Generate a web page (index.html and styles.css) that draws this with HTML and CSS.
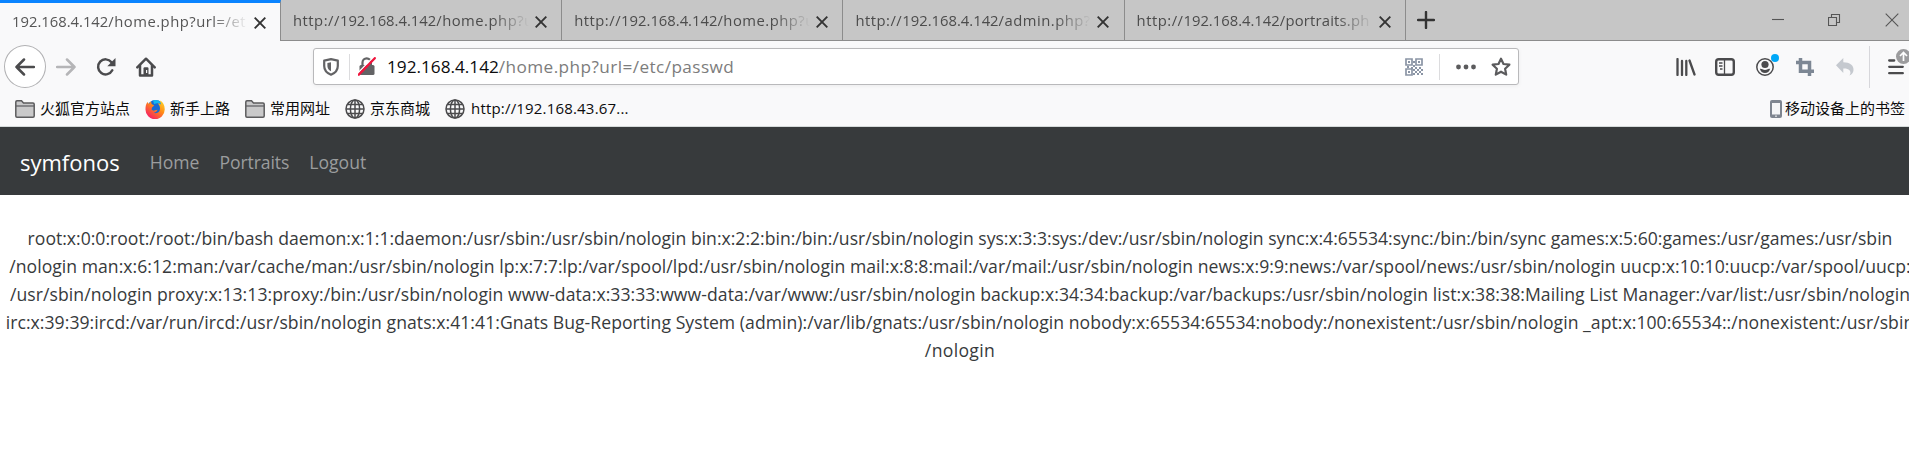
FILE: index.html
```html
<!DOCTYPE html>
<html lang="zh-CN">
<head>
<meta charset="utf-8">
<title>symfonos</title>
<link rel="stylesheet" href="styles.css">
</head>
<body>
<div class="window">
  <div class="tabstrip">
    <div class="tab active"><span class="tab-title">192.168.4.142<span class="path">/home.php?url=/et</span></span><svg class="close" viewBox="0 0 12 12"><path d="M.7.7l10.600 10.600M11.300.7L.7 11.300"/></svg></div>
    <div class="tab"><span class="tab-title"><span class="scheme">http://</span>192.168.4.142<span class="path">/home.php?u</span></span><svg class="close" viewBox="0 0 12 12"><path d="M.7.7l10.600 10.600M11.300.7L.7 11.300"/></svg></div>
    <div class="tab"><span class="tab-title"><span class="scheme">http://</span>192.168.4.142<span class="path">/home.php?u</span></span><svg class="close" viewBox="0 0 12 12"><path d="M.7.7l10.600 10.600M11.300.7L.7 11.300"/></svg></div>
    <div class="tab"><span class="tab-title"><span class="scheme">http://</span>192.168.4.142<span class="path">/admin.php?</span></span><svg class="close" viewBox="0 0 12 12"><path d="M.7.7l10.600 10.600M11.300.7L.7 11.300"/></svg></div>
    <div class="tab"><span class="tab-title"><span class="scheme">http://</span>192.168.4.142<span class="path tight">/portraits.ph</span></span><svg class="close" viewBox="0 0 12 12"><path d="M.7.7l10.600 10.600M11.300.7L.7 11.300"/></svg></div>
    <svg class="newtab" viewBox="0 0 18 18"><path d="M9 1v16M1 9h16"/></svg>
    <div class="controls">
      <svg width="12" height="14" viewBox="0 0 12 14"><path d="M0 6.500h12"/></svg>
      <svg width="13" height="14" viewBox="0 0 13 14"><path d="M.5 4.500h8v8h-8zM3.500 4.500v-3h8v8h-3"/></svg>
      <svg width="14" height="14" viewBox="0 0 14 14"><path d="M.7.7l12.600 12.600M13.300.7L.7 13.300"/></svg>
    </div>
  </div>

  <div class="toolbar">
    <div class="back"><svg width="20" height="18" viewBox="0 0 20 18"><path d="M19 9H1.500M9 1.500L1.500 9 9 16.500"/></svg></div>
    <svg class="forward" width="20" height="18" viewBox="0 0 20 18"><path d="M1 9h17.500M11 1.500L18.500 9 11 16.500"/></svg>
    <svg class="reload" width="20" height="20" viewBox="0 0 20 20"><path class="ln" d="M16.300 13.300A7.500 7.500 0 1 1 15.500 5.200"/><path class="fl" d="M19.500 1v8.200h-8.200z"/></svg>
    <svg class="home" width="20" height="20" viewBox="0 0 20 20"><path class="ln" d="M1.300 10.300L10 1.700l8.700 8.600"/><path class="ln" d="M4 8.500V18.500h12V8.500"/><path class="fl" d="M7.500 19v-7.500q0-1.200 1.200-1.200h2.600q1.200 0 1.200 1.200V19z"/><path class="hole" d="M10 13h1.200v3H10z"/></svg>

    <div class="urlbar">
      <svg class="shield" width="16" height="18" viewBox="0 0 16 18"><path class="ln" d="M8 1.200L14.800 2.600V8c0 4-2.500 7-6.800 8.700C3.700 15 1.200 12 1.200 8V2.600z"/><path class="fl" d="M8 4.200V13.200C5.500 12 4.400 10 4.400 8V5z"/></svg>
      <span class="url-sep"></span>
      <svg class="lock" width="18" height="19" viewBox="0 0 18 19"><path class="ln" d="M4.500 9V5.500a4.200 4.200 0 0 1 8.400 0V9"/><path class="fl" d="M3 8h12q1.500 0 1.500 1.500v7q0 1.500-1.500 1.500H3q-1.500 0-1.500-1.500v-7Q1.500 8 3 8z"/><path class="halo" d="M-.5 16.500L15.800-.2"/><path class="slash" d="M.8 17.700L16.800 1.200"/></svg>
      <span class="url"><span class="host">192.168.4.142</span>/home.php?url=/etc/passwd</span>
      <svg class="qr" width="18" height="18" viewBox="0 0 18 18"><path class="ln" d="M1 1h6v6H1zM11 1h6v6h-6zM1 11h6v6H1z"/><path class="fl" d="M3 3h2v2H3zM13 3h2v2h-2zM3 13h2v2H3zM8 3h2v2H8zM8 7h2v2H8zM6 9h2v2H6zM2 8h2v2H2zM10 9h2v2h-2zM14 9h2v2h-2zM12 11h2v2h-2zM16 11h2v2h-2zM8 11h2v2H8zM10 13h2v2h-2zM14 13h2v2h-2zM12 15h2v2h-2zM16 15h2v2h-2zM8 15h2v2H8z"/></svg>
      <span class="url-sep right"></span>
      <svg class="dots" width="20" height="6" viewBox="0 0 20 6"><circle cx="2.500" cy="3" r="2.400"/><circle cx="10" cy="3" r="2.400"/><circle cx="17.500" cy="3" r="2.400"/></svg>
      <svg class="star" width="20" height="20" viewBox="0 0 20 20"><path d="M10 1.700l2.500 5.300 5.900.7-4.300 4 1.100 5.900L10 14.700l-5.200 2.900 1.100-5.900-4.300-4L7.500 7z"/></svg>
    </div>

    <div class="tools">
      <svg class="library" width="20" height="18" viewBox="0 0 20 18"><path d="M1.500 1v16M6 3v14M10.300 3v14M13.500 2.500l5 14"/></svg>
      <svg class="sidebar" width="20" height="18" viewBox="0 0 20 18"><rect x="1.200" y="1.200" width="17.600" height="15.600" rx="2.500"/><path class="thin" d="M9.500 1v16M4 5h3.500M4 8h3.500M5 11h2.500"/></svg>
      <div class="account"><svg width="18" height="18" viewBox="0 0 18 18"><circle class="ring" cx="9" cy="9" r="8.200"/><circle cx="9" cy="6.500" r="3.600"/><path d="M3.800 10.800c1 .2 1.800 0 2.600.4q2.600 1.400 5.200 0c.8-.4 1.600-.2 2.600-.4-.8 2.800-2.600 4.300-5.200 4.300s-4.400-1.500-5.200-4.300z"/></svg><i class="badge"></i></div>
      <svg class="crop" width="18" height="18" viewBox="0 0 18 18"><path d="M4.500 0v13.300H18M0 4.500h13.500V18"/></svg>
      <svg class="undo" width="18" height="18" viewBox="0 0 18 18"><path d="M7.300 0v4.300c6.500 0 10.700 3 10.200 8-.2 2.500-1.700 4.500-4.200 5.200 1.500-1.700 1.500-3.800.2-5.300-1.300-1.400-3.300-1.800-6.200-1.700v4.500L0 7.300z"/></svg>
      <span class="tool-sep"></span>
      <div class="menu"><svg class="bars" width="16" height="16" viewBox="0 0 16 16"><path d="M1.200 1.500h5M1.200 7.800h13.600M1.200 14.200h13.600"/></svg><svg class="update" width="15" height="15" viewBox="0 0 15 15"><circle cx="7.500" cy="7.500" r="7.500"/><path d="M7.500 12V3.500M4 7l3.500-3.500L11 7"/></svg></div>
    </div>
  </div>

  <div class="bookmarks">
    <a class="bm b1"><svg width="20" height="18" viewBox="0 0 20 18"><path class="folder" d="M.8 16V2q0-1.200 1.200-1.200h4.500L8.500 3H18q1.200 0 1.200 1.200V16q0 1.200-1.200 1.200H2Q.8 17.200.8 16z"/><path class="folder-in" d="M1 6h18"/></svg><span>火狐官方站点</span></a>
    <a class="bm b2"><svg width="20" height="20" viewBox="0 0 20 20"><defs><linearGradient id="fx" x1="1" y1="0" x2=".2" y2="1"><stop offset="0" stop-color="#ffe226"/><stop offset=".45" stop-color="#ff8a16"/><stop offset="1" stop-color="#f5156c"/></linearGradient></defs><circle cx="10.500" cy="9.500" r="8.500" fill="#1769d2"/><path fill="#12b8f0" d="M8 1.300Q14 0 17 5l-4-1-4 1z"/><path fill="url(#fx)" d="M2.500 3l1.300 2L6 2.200 6.600 5l2.600 1.500L7 8.500l-.5 2c1 1 2 1.500 3.500.8l2.500-.6c-.5 2-2.500 3-4 3 3.500 1.500 6.500-.6 6.500-4.200 0-2.500-1-4-2.500-5 2-.2 3 .5 3.500 1L15 1.500c3 1.500 5 5 4.700 9.300A9.600 9.600 0 0 1 .5 10.500C.4 7.500 1 5 2.500 3z"/></svg><span>新手上路</span></a>
    <a class="bm b3"><svg width="20" height="18" viewBox="0 0 20 18"><path class="folder" d="M.8 16V2q0-1.200 1.200-1.200h4.500L8.500 3H18q1.200 0 1.200 1.200V16q0 1.200-1.200 1.200H2Q.8 17.200.8 16z"/><path class="folder-in" d="M1 6h18"/></svg><span>常用网址</span></a>
    <a class="bm b4"><svg width="20" height="20" viewBox="0 0 20 20"><g class="globe"><circle cx="10" cy="10" r="9"/><ellipse cx="10" cy="10" rx="4.600" ry="9"/><path d="M10 1v18M1 10h18M2.800 5.500h14.400M2.800 14.500h14.400"/></g></svg><span>京东商城</span></a>
    <a class="bm b5"><svg width="20" height="20" viewBox="0 0 20 20"><g class="globe"><circle cx="10" cy="10" r="9"/><ellipse cx="10" cy="10" rx="4.600" ry="9"/><path d="M10 1v18M1 10h18M2.800 5.500h14.400M2.800 14.500h14.400"/></g></svg><span class="latin">http://192.168.43.67...</span></a>
    <a class="bm mobile"><svg width="12" height="18" viewBox="0 0 12 18"><rect x="0" y="0" width="12" height="18" rx="2" fill="#7e8590"/><rect x="2" y="3" width="8" height="11.500" fill="#f4f5f7"/><circle cx="6" cy="16.200" r=".9" fill="#dde0e4"/></svg><span>移动设备上的书签</span></a>
  </div>

  <nav class="navbar">
    <a class="brand">symfonos</a>
    <a class="n1">Home</a>
    <a class="n2">Portraits</a>
    <a class="n3">Logout</a>
  </nav>

  <main class="output">
    <div class="l1">root:x:0:0:root:/root:/bin/bash daemon:x:1:1:daemon:/usr/sbin:/usr/sbin/nologin bin:x:2:2:bin:/bin:/usr/sbin/nologin sys:x:3:3:sys:/dev:/usr/sbin/nologin sync:x:4:65534:sync:/bin:/bin/sync games:x:5:60:games:/usr/games:/usr/sbin</div>
    <div class="l2">/nologin man:x:6:12:man:/var/cache/man:/usr/sbin/nologin lp:x:7:7:lp:/var/spool/lpd:/usr/sbin/nologin mail:x:8:8:mail:/var/mail:/usr/sbin/nologin news:x:9:9:news:/var/spool/news:/usr/sbin/nologin uucp:x:10:10:uucp:/var/spool/uucp:</div>
    <div class="l3">/usr/sbin/nologin proxy:x:13:13:proxy:/bin:/usr/sbin/nologin www-data:x:33:33:www-data:/var/www:/usr/sbin/nologin backup:x:34:34:backup:/var/backups:/usr/sbin/nologin list:x:38:38:Mailing List Manager:/var/list:/usr/sbin/nologin</div>
    <div class="l4">irc:x:39:39:ircd:/var/run/ircd:/usr/sbin/nologin gnats:x:41:41:Gnats Bug-Reporting System (admin):/var/lib/gnats:/usr/sbin/nologin nobody:x:65534:65534:nobody:/nonexistent:/usr/sbin/nologin _apt:x:100:65534::/nonexistent:/usr/sbin</div>
    <div class="l5">/nologin</div>
  </main>
</div>
</body>
</html>
```
FILE: styles.css
```css
* { box-sizing: border-box; }
body {
  margin: 0;
  background: #fff;
  overflow: hidden;
  font-family: "Open Sans", "Noto Sans", "Noto Sans CJK SC", sans-serif;
}
svg { display: block; flex: none; fill: none; stroke: none; }
.window { width: 1920px; height: 472px; overflow: hidden; }

/* tab strip */
.tabstrip {
  display: flex;
  height: 41px;
  background: #c6c6c6;
  border-bottom: 1px solid #8c8c8c;
}
.tab {
  display: flex;
  align-items: center;
  width: 281.200px;
  flex: none;
  height: 40px;
  padding: 0 14px 1px 12px;
  border-right: 1px solid #8c8c8c;
  color: #4c4c4c;
  font-size: 14.800px;
}
.tab.active {
  height: 41px;
  width: 281px;
  padding: 0 14px 3px 12px;
  border-top: 3px solid #0a84ff;
  background: #f9f9fa;
  color: #555;
}
.tab-title {
  width: 236px;
  overflow: hidden;
  white-space: nowrap;
  mask-image: linear-gradient(to right, #000 200px, transparent 236px);
}
.scheme { letter-spacing: .5px; }
.path { letter-spacing: .5px; }
.path.tight { letter-spacing: .2px; }
.close { width: 12px; height: 12px; margin-left: 6px; margin-top: 4px; stroke: #333; stroke-width: 1.900; }
.newtab { width: 18px; height: 18px; margin: 11px 0 0 11px; stroke: #333; stroke-width: 2.400; stroke-linecap: round; }
.controls { display: flex; gap: 44px; margin: 13px 21px 0 auto; }
.controls svg { stroke: #555; stroke-width: 1.100; }

/* navigation toolbar */
.toolbar { display: flex; align-items: center; height: 51px; padding-left: 4px; background: #f9f9fa; }
.back {
  display: flex; align-items: center; justify-content: center;
  width: 42px; height: 43px;
  border: 1px solid #b1b1b3; border-radius: 50%;
  background: #fff;
}
.back svg, .forward { stroke: #4b4b4d; stroke-width: 2.500; stroke-linecap: round; stroke-linejoin: round; }
.forward { margin-left: 10px; stroke: #b5b5b7; }
.reload { margin-left: 20px; }
.home { margin-left: 20px; }
.ln { stroke: #4b4b4d; stroke-width: 2.500; stroke-linejoin: round; stroke-linecap: round; }
.fl { fill: #4b4b4d; }
.hole { fill: #f9f9fa; }
.urlbar {
  display: flex; align-items: center;
  width: 1206px; height: 37px;
  margin-left: 157px;
  padding-left: 9px;
  border: 1px solid #b9b9bb; border-radius: 3px;
  background: #fff;
  box-shadow: 0 1px 4px rgba(0, 0, 0, .06);
}
.urlbar .ln { stroke: #636365; stroke-width: 2.200; }
.urlbar .fl { fill: #636365; }
.url-sep { width: 1px; height: 26px; margin-left: 10px; background: #dcdcde; }
.lock { margin-left: 8px; }
.lock .halo { stroke: #fff; stroke-width: 1.500; }
.lock .slash { stroke: #f0143c; stroke-width: 2.300; stroke-linecap: round; }
.url { margin-left: 11px; padding-bottom: 1px; color: #7c7c7c; font-size: 17.200px; letter-spacing: .42px; white-space: nowrap; }
.host { color: #0c0c0d; letter-spacing: 0; }
.qr { margin-left: auto; }
.urlbar .qr .ln { stroke: #8b95a5; stroke-width: 1.700; stroke-linejoin: miter; }
.urlbar .qr .fl { fill: #8b95a5; }
.url-sep.right { margin-left: 16px; }
.dots { margin-left: 16px; fill: #5b5b5d; }
.star { margin: 0 7px 0 15px; stroke: #5b5b5d; stroke-width: 2.200; stroke-linejoin: round; }
.tools { display: flex; align-items: center; margin-left: 157px; }
.library { stroke: #4b4b4d; stroke-width: 2.300; stroke-linecap: round; }
.sidebar { margin-left: 19px; stroke: #4b4b4d; stroke-width: 2.400; }
.sidebar .thin { stroke-width: 1.300; }
.account { position: relative; margin-left: 21px; }
.account svg { fill: #4b4b4d; }
.account .ring { fill: none; stroke: #4b4b4d; stroke-width: 1.500; }
.badge { position: absolute; left: 15px; top: -4px; width: 8px; height: 8px; border-radius: 50%; background: #00a8f8; }
.crop { margin-left: 22px; stroke: #7d8794; stroke-width: 3.500; }
.undo { margin-left: 22px; fill: #c5c9cf; }
.tool-sep { width: 1px; height: 42px; margin-left: 15px; background: #d7d7db; }
.menu { position: relative; margin-left: 18px; }
.bars { stroke: #4b4b4d; stroke-width: 2.300; stroke-linecap: round; }
.update { position: absolute; left: 8px; top: -10px; stroke: #fff; stroke-width: 1.700; }
.update circle { fill: #9c9c9e; stroke: none; }

/* bookmarks */
.bookmarks {
  display: flex; align-items: center;
  height: 35px;
  padding: 0 15px;
  border-bottom: 1px solid #d5dada;
  background: #f9f9fa;
  color: #0c0c0d;
  font-size: 15px; line-height: 20px;
}
.bm { display: flex; align-items: center; gap: 5px; white-space: nowrap; font-family: "Noto Sans CJK SC", sans-serif; }
.bm span { padding-bottom: 2px; }
.b2, .b3, .b4, .b5 { margin-left: 15px; }
.b5 { gap: 6px; }
.bm .latin { font-family: "Open Sans", sans-serif; letter-spacing: .18px; }
.mobile { margin-left: auto; gap: 3px; }
.folder { fill: #c9c9ca; stroke: #5c5c5e; stroke-width: 1.500; }
.folder-in { stroke: #5c5c5e; stroke-width: 1.200; }
.globe { stroke: #4b4b4d; stroke-width: 1.500; }

/* page */
.navbar { display: flex; align-items: center; height: 68px; padding: 1px 0 0 20px; background: #373a3c; color: #9b9d9e; font-size: 17.600px; }
.brand { color: #fff; font-size: 22px; }
.n1 { margin-left: 30px; }
.n2 { margin-left: 20px; letter-spacing: -.1px; }
.n3 { margin-left: 20px; }
.output { padding-top: 29px; color: #373a3c; font-size: 17.600px; line-height: 28px; text-align: center; white-space: nowrap; }
.l2 { letter-spacing: .033px; }
.l3 { letter-spacing: .06px; }
.l4 { letter-spacing: .045px; }
.l5 { letter-spacing: .33px; }
```
